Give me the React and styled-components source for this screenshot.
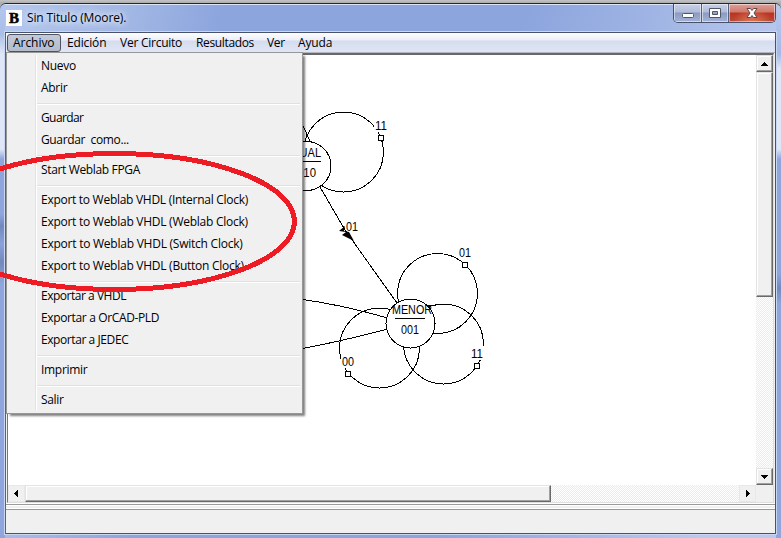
import React from "react";
import styled, { createGlobalStyle } from "styled-components";

const Global = createGlobalStyle`
  * { box-sizing: border-box; }
  body { margin: 0; overflow: hidden; background: #b8b8b8; }
`;

const ui = `"Open Sans", "Noto Sans", sans-serif`;

const Desktop = styled.div`
  position: relative;
  width: 781px;
  height: 538px;
  padding-top: 3px;
  overflow: hidden;
  background: linear-gradient(#c4c4c4, #adadad 3px);
  font: 12px/22px ${ui};
  color: #000;
`;

const Frame = styled.div`
  display: flex;
  flex-direction: column;
  height: 535px;
  padding: 0 5px 4px 5px;
  border-top: 1px solid #202634;
  border-radius: 6px 6px 0 0;
  background:
    linear-gradient(#dbe6fa, #dbe6fa) 0 0 / 100% 1px no-repeat,
    linear-gradient(#b4c7ee 0, #a9bee8 30px, #dfe7f7 50px, #dfe7f7 145px, #8fa6dc 155px, #8fa6dc 210px, #7189bd 222px, #8ca3da 240px, #7189bd 258px, #8fa6dc 280px) 0 0 / 5px 100% no-repeat,
    linear-gradient(#b9c9ee 0, #a5b9e5 50px, #dfe7f7 65px, #dfe7f7 145px, #8fa6dc 155px, #8fa6dc 270px, #7189bd 284px, #8fa6dc 300px) 100% 0 / 5px 100% no-repeat,
    linear-gradient(100deg, #b6c8ed 0, #9fb5e3 140px, #8ca5dd 220px, #8ca5dd 520px, #9fb4e4 640px, #bac8ee 781px);
`;

const TitleBar = styled.header`
  display: flex;
  align-items: flex-start;
  height: 28px;
  flex: none;
`;

const AppIcon = styled.span`
  width: 16px;
  height: 16px;
  margin: 6px 5px 0 1px;
  background: #fff;
  font: bold 15px/17px "Liberation Serif", serif;
  -webkit-text-stroke: 0.5px #000;
  text-align: center;
`;

const Title = styled.span`
  margin-top: 3px;
  height: 22px;
  flex: 1;
  letter-spacing: -0.14px;
  text-shadow: 0 0 8px #e5edfb, 0 0 8px #e5edfb, 0 0 5px #dce7fa;
`;

const Controls = styled.div`
  display: flex;
  width: 103px;
  height: 19px;
  border: 1px solid #485169;
  border-top: 0;
  border-radius: 0 0 5px 5px;
  overflow: hidden;
`;

const Control = styled.button`
  display: grid;
  place-items: center;
  width: ${(p) => p.$w}px;
  height: 18px;
  padding: 0;
  border: 0;
  border-right: ${(p) => (p.$close ? 0 : "1px solid #55617c")};
  box-shadow: inset 0 0 0 1px rgba(255, 255, 255, 0.5);
  background: ${(p) =>
    p.$close
      ? "radial-gradient(ellipse at 50% 110%, #e07a58 0, transparent 60%), linear-gradient(#dea099 0, #cf7a6c 8px, #b83323 9px, #ba4b34 100%)"
      : "linear-gradient(#c6d0e8 0, #b0bcd9 8px, #8b9ac0 9px, #a4b4d9 100%)"};
`;

const Client = styled.main`
  display: flex;
  flex-direction: column;
  flex: 1;
  border: 1px solid #48526b;
  border-left-color: #56617b;
  outline: 1px solid #c9d7f3;
  background: #f0f0f0;
  overflow: hidden;
`;

const MenuBar = styled.nav`
  display: flex;
  height: 20px;
  flex: none;
  padding-left: 1px;
  background: linear-gradient(#fdfdff 0, #eceff9 7px, #d5dcef 8px, #dfe5f4 18px);
  border-bottom: 1px solid #b4b6bd;
`;

const MenuTitle = styled.span`
  width: ${(p) => p.$w}px;
  height: 18px;
  margin-top: 1px;
  padding-left: 5px;
  border: 1px solid ${(p) => (p.$open ? "#4d535f" : "transparent")};
  border-radius: 3px;
  background: ${(p) => (p.$open ? "linear-gradient(#c4cad8, #b4bbcc)" : "none")};
  line-height: 16px;
  letter-spacing: ${(p) => p.$ls}px;
  white-space: nowrap;
`;

const Viewport = styled.section`
  display: grid;
  grid-template: 430px 17px / 748px 17px;
  height: 450px;
  flex: none;
  margin-left: 1px;
  border-top: 2px solid #686868;
  border-left: 1px solid #777;
  border-right: 1px solid #dedede;
  border-bottom: 1px solid #dedede;
  width: 767px;
`;

const Drawing = styled.svg`
  display: block;
  background: #fff;
  font: 13px "Liberation Sans", Arial, sans-serif;
`;

const Track = styled.div`
  display: flex;
  flex-direction: ${(p) => (p.$vertical ? "column" : "row")};
  background: repeating-conic-gradient(#fff 0 25%, #ebebeb 0 50%) 0 0 / 2px 2px;
`;

const Raised = styled.div`
  display: grid;
  place-items: center;
  width: ${(p) => p.$w}px;
  height: ${(p) => p.$h}px;
  background: #f0f0f0;
  border: 1px solid;
  border-color: ${(p) => (p.$flat ? "#e8e8e8" : "#e3e3e3 #696969 #696969 #e3e3e3")};
  box-shadow: ${(p) => (p.$flat ? "none" : "inset -1px -1px #a0a0a0, inset 1px 1px #fff")};
`;

const Spacer = styled.i`
  flex: 1;
`;

const Status = styled.footer`
  flex: 1;
  border-top: 1px solid #fff;
  background: linear-gradient(#9b9b9b 0 1px, #fff 1px 2px, #f0f0f0 2px 4px, #fff 4px 5px, #979797 5px 6px, #f0f0f0 6px);
`;

const Dropdown = styled.div`
  position: absolute;
  left: 6px;
  top: 52px;
  width: 297px;
  height: 362px;
  padding: 2px 2px 0 0;
  border: 1px solid #979797;
  background: linear-gradient(90deg, transparent 28px, #e2e3e3 28px 29px, #fff 29px 30px, transparent 30px) 0 2px / 100% 356px no-repeat #f0f0f0;
  box-shadow: 3px 3px 2px -1px rgba(0, 0, 0, 0.5);
`;

const Item = styled.div`
  height: 22px;
  padding-left: 34px;
  line-height: 22px;
  letter-spacing: ${(p) => p.$ls}px;
  white-space: pre;
`;

const Separator = styled.div`
  height: 8px;
  margin-left: 30px;
  background: linear-gradient(transparent 4px, #e0e0e0 4px 5px, #fff 5px 6px, transparent 6px);
`;

const Highlight = styled.svg`
  position: absolute;
  left: 0;
  top: 140px;
`;

const Arrow = ({ d }) => (
  <svg width="9" height="9" shapeRendering="crispEdges">
    <path d={d} />
  </svg>
);

const titles = [
  ["Archivo", 54, -0.05],
  ["Edición", 53, -0.15],
  ["Ver Circuito", 76, -0.25],
  ["Resultados", 71, -0.35],
  ["Ver", 31, -0.3],
  ["Ayuda", 48, -0.15],
];

const groups = [
  [["Nuevo", -0.3], ["Abrir", -0.3]],
  [["Guardar", -0.6], ["Guardar  como...", -0.36]],
  [["Start Weblab FPGA", -0.35]],
  [
    ["Export to Weblab VHDL (Internal Clock)", -0.28],
    ["Export to Weblab VHDL (Weblab Clock)", -0.26],
    ["Export to Weblab VHDL (Switch Clock)", -0.24],
    ["Export to Weblab VHDL (Button Clock)", -0.26],
  ],
  [["Exportar a VHDL", -0.48], ["Exportar a OrCAD-PLD", -0.36], ["Exportar a JEDEC", -0.42]],
  [["Imprimir", -0.3]],
  [["Salir", -0.35]],
];

const loops = [
  [343.5, 152, "11", 375, 130, 381, 138],
  [437.5, 293.5, "01", 459, 257, 465, 265],
  [443.5, 344, "11", 471, 358, 477, 366],
  [379.5, 348, "00", 342, 366, 348, 374],
];

function Diagram() {
  return (
    <Drawing width="748" height="430" viewBox="8 55 748 430">
      <g fill="none" stroke="#000" shapeRendering="crispEdges">
        {loops.map(([x, y]) => (
          <circle key={`${x}`} cx={x} cy={y} r="40" />
        ))}
        <path d="M300 119L310 141M320 187L345 230L397 303M303 299.5Q342 305 386 317.5M303 348.5Q342 341 386 329.5" />
      </g>
      <g fill="#fff" stroke="#000" shapeRendering="crispEdges">
        <circle cx="306.5" cy="166" r="24.5" />
        <circle cx="410.5" cy="323.5" r="24.5" />
        <path fill="none" d="M292 161.5H321M395 318.5H425M303 141.5H310M426 305.5H436M427 306L431 309" />
      </g>
      <path d="M345 226L339 231L346 232L342 235L354 241L349 232L344 231Z" />
      {loops.map(([x, , t, tx, ty, bx, by]) => (
        <g key={`${x}`}>
          <rect x={tx - 1} y={ty - 12} width="14" height="14" fill="#fff" />
          <text x={tx} y={ty} textLength="12" lengthAdjust="spacingAndGlyphs">{t}</text>
          <rect x={bx - 2.5} y={by - 2.5} width="5" height="5" fill="#fff" stroke="#000" shapeRendering="crispEdges" />
        </g>
      ))}
      <text x="346" y="231" textLength="12" lengthAdjust="spacingAndGlyphs">01</text>
      <text x="288" y="157" textLength="33" lengthAdjust="spacingAndGlyphs">IGUAL</text>
      <text x="297" y="177" textLength="19" lengthAdjust="spacingAndGlyphs">010</text>
      <text x="392" y="314" textLength="40" lengthAdjust="spacingAndGlyphs">MENOR</text>
      <text x="401" y="334" textLength="18" lengthAdjust="spacingAndGlyphs">001</text>
    </Drawing>
  );
}

export default function App() {
  return (
    <Desktop>
      <Global />
      <Frame>
        <TitleBar>
          <AppIcon>B</AppIcon>
          <Title>Sin Titulo (Moore).</Title>
          <Controls>
            <Control $w={28} aria-label="Minimizar">
              <svg width="14" height="14"><rect x="1.5" y="7.5" width="11" height="4" rx="1" fill="#fff" stroke="#505866" /></svg>
            </Control>
            <Control $w={27} aria-label="Maximizar">
              <svg width="14" height="14"><path d="M1.5 2.500h11v9h-11zM4.500 5.500v3h5v-3z" fill="#fff" fillRule="evenodd" stroke="#505866" /></svg>
            </Control>
            <Control $w={46} $close aria-label="Cerrar">
              <svg width="14" height="14"><path d="M2 2.500h3.500L7 4.500l1.500-2H12L9 7l3 4.500H8.500L7 9.500l-1.500 2H2L5 7z" fill="#fff" stroke="#5a4a50" /></svg>
            </Control>
          </Controls>
        </TitleBar>
        <Client>
          <MenuBar>
            {titles.map(([t, w, ls], i) => (
              <MenuTitle key={t} $w={w} $ls={ls} $open={i === 0}>{t}</MenuTitle>
            ))}
          </MenuBar>
          <Viewport>
            <Diagram />
            <Track $vertical>
              <Raised $w={17} $h={17}><Arrow d="M4 3h1v1h1v1h1v1h1v1H1V6h1V5h1V4h1z" /></Raised>
              <Raised $w={17} $h={225} />
              <Spacer />
              <Raised $w={17} $h={17}><Arrow d="M1 3h7v1H7v1H6v1H5v1H4V6H3V5H2V4H1z" /></Raised>
            </Track>
            <Track>
              <Raised $flat $w={17} $h={17}><Arrow d="M6 1v7H5V7H4V6H3V5H2V4h1V3h1V2h1V1z" /></Raised>
              <Raised $w={526} $h={17} />
              <Spacer />
              <Raised $flat $w={17} $h={17}><Arrow d="M3 1v7h1V7h1V6h1V5h1V4H6V3H5V2H4V1z" /></Raised>
            </Track>
          </Viewport>
          <Status />
        </Client>
      </Frame>
      <Dropdown>
        {groups.map((g, i) => (
          <React.Fragment key={i}>
            {i > 0 && <Separator />}
            {g.map(([t, ls]) => <Item key={t} $ls={ls}>{t}</Item>)}
          </React.Fragment>
        ))}
      </Dropdown>
      <Highlight width="310" height="160" viewBox="0 140 310 160" shapeRendering="crispEdges">
        <ellipse cx="114.500" cy="221.500" rx="180" ry="68" fill="none" stroke="#ed1c24" strokeWidth="5" />
      </Highlight>
    </Desktop>
  );
}
